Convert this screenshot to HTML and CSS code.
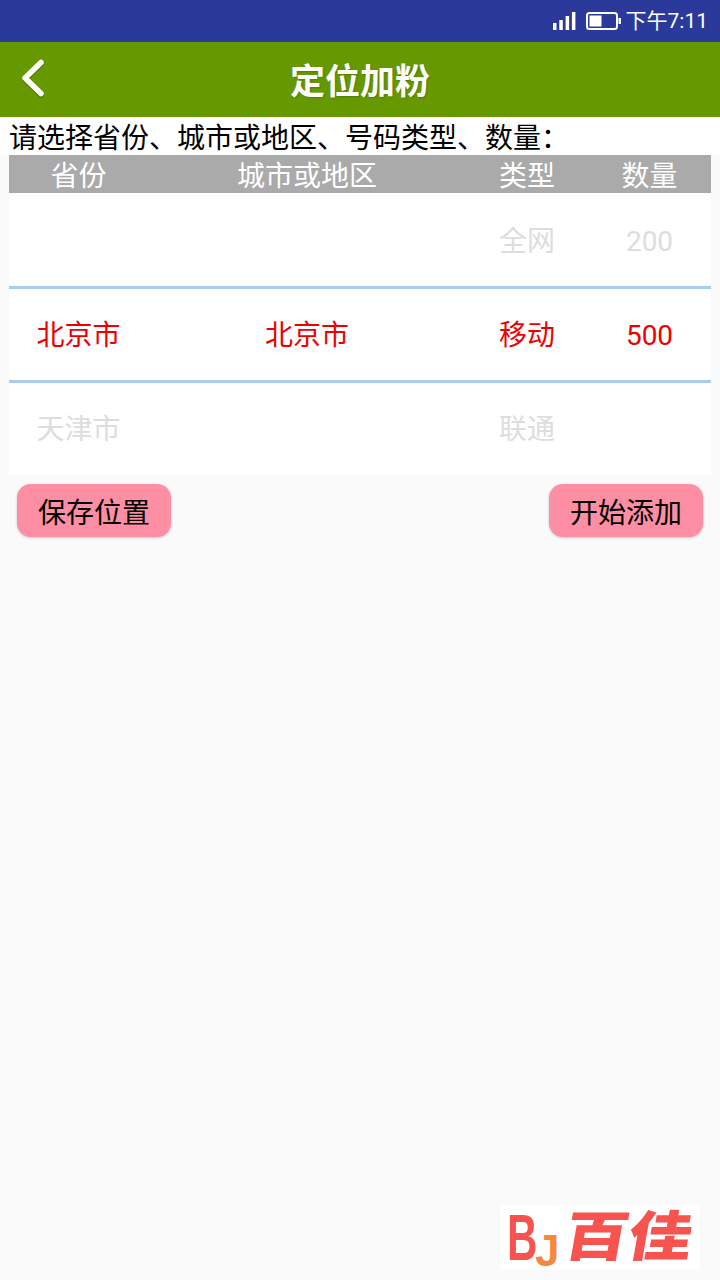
FILE: index.html
```html
<!DOCTYPE html>
<html lang="zh-CN">
<head>
    <meta charset="UTF-8">
    <meta name="viewport" content="width=device-width, initial-scale=1.0">
    <title>定位加粉</title>
    <link rel="stylesheet" href="styles.css">
</head>
<body>
<div class="screen">
    <div class="status-bar">
        <svg class="signal-icon" width="23" height="18" viewBox="0 0 23 18">
            <rect x="0" y="11" width="3.5" height="7" fill="#fff"/>
            <rect x="6.3" y="8" width="3.5" height="10" fill="#fff"/>
            <rect x="12.6" y="4" width="3.5" height="14" fill="#fff"/>
            <rect x="18.9" y="0" width="3.5" height="18" fill="#fff"/>
        </svg>
        <svg class="battery-icon" width="35" height="18" viewBox="0 0 35 18">
            <rect x="1" y="1" width="30" height="16" rx="2.5" fill="none" stroke="#fff" stroke-width="2"/>
            <rect x="3.500" y="3.500" width="12" height="11" fill="#fff"/>
            <rect x="32.500" y="6" width="2.500" height="6" fill="#fff"/>
        </svg>
        <span class="clock">下午7:11</span>
    </div>

    <div class="toolbar">
        <svg class="back-icon" width="30" height="42" viewBox="0 0 30 42">
            <path class="back-shadow" d="M23 6 L7 21.5 L23 37"/>
            <path class="back-arrow" d="M23 4.500 L7 20 L23 35.500"/>
        </svg>
        <h1 class="title">定位加粉</h1>
    </div>

    <p class="hint">请选择省份、城市或地区、号码类型、数量：</p>

    <div class="picker-head cols">
        <span>省份</span>
        <span>城市或地区</span>
        <span>类型</span>
        <span>数量</span>
    </div>

    <div class="picker">
        <div class="picker-row cols muted">
            <span></span>
            <span></span>
            <span>全网</span>
            <span>200</span>
        </div>
        <div class="picker-row cols selected">
            <span>北京市</span>
            <span>北京市</span>
            <span>移动</span>
            <span>500</span>
        </div>
        <div class="picker-row cols muted last">
            <span>天津市</span>
            <span></span>
            <span>联通</span>
            <span></span>
        </div>
    </div>

    <div class="actions">
        <button type="button" class="pink-btn">保存位置</button>
        <button type="button" class="pink-btn">开始添加</button>
    </div>

    <div class="spacer"></div>

    <div class="watermark">
        <div class="logo">
            <span class="logo-b">B</span><span class="logo-j">J</span><span class="logo-name">百佳</span>
        </div>
    </div>
</div>
</body>
</html>
```

FILE: styles.css
```css
* { box-sizing: border-box; }
html, body { margin: 0; padding: 0; }
body { font-family: Roboto, "Noto Sans CJK SC", sans-serif; background-color: #fafafa; }
.screen { width: 720px; height: 1280px; display: flex; flex-direction: column; overflow: hidden; }

/* Status bar */
.status-bar { height: 42px; background-color: #2b3a9a; color: #fff; display: flex; align-items: center; justify-content: flex-end; padding-right: 12px; }
.signal-icon { margin-right: 10px; }
.battery-icon { margin-right: 5px; }
.clock { font-size: 21px; line-height: 42px; }

/* Toolbar */
.toolbar { height: 75px; background-color: #669900; display: flex; align-items: center; justify-content: center; position: relative; padding-bottom: 3px; }
.back-icon { position: absolute; left: 18px; top: 16px; }
.back-arrow, .back-shadow { fill: none; stroke-width: 5.5; stroke-linecap: round; stroke-linejoin: round; }
.back-arrow { stroke: #fff; }
.back-shadow { stroke: rgba(0,0,0,0.2); }
.title { margin: 0; color: #fff; font-size: 35px; font-weight: 700; text-shadow: 1px 1px 2px rgba(0,0,0,0.2); }

.hint { margin: 0; height: 38px; padding-left: 9px; font-size: 28px; line-height: 44px; color: #000; background-color: #fff; white-space: nowrap; }

/* Picker */
.cols { display: grid; grid-template-columns: 139px 318px 122px 123px; text-align: center; }
.picker-head { height: 38px; margin: 0 9px; background-color: #aaaaaa; color: #fff; font-size: 28px; line-height: 44px; }
.picker { margin: 0 9px; background-color: #fff; height: 282px; }
.picker-row { height: 94px; font-size: 28px; line-height: 98px; }
.picker-row.muted { color: #dddddd; }
.picker-row.last { line-height: 100px; }
.picker-row.selected { color: #ee0000; border-top: 3px solid #a9cdea; border-bottom: 3px solid #a9cdea; line-height: 94px; height: 97px; margin-bottom: -3px; margin-top: -1px; }

/* Buttons */
.actions { display: flex; justify-content: space-between; padding: 9px 17px 0; }
.pink-btn { width: 154px; height: 53px; padding: 0; border: none; border-radius: 14px; background-color: #fe8ea3; color: #000; font-family: inherit; font-size: 28px; box-shadow: 0 1px 3px rgba(0,0,0,0.2); }

.spacer { flex: 1; }

/* Watermark logo */
.watermark { display: flex; justify-content: flex-end; padding: 0 20px 10px 0; }
.logo { width: 200px; height: 65px; background-color: #fff; display: flex; align-items: center; padding-left: 7px; color: #f75450; white-space: nowrap; }
.logo-b { display: inline-block; width: 28px; font-family: "Liberation Sans", sans-serif; font-size: 64px; line-height: 1; font-weight: 700; transform: scaleX(0.66); transform-origin: left center; }
.logo-j { display: inline-block; width: 26px; font-family: "Liberation Sans", sans-serif; font-size: 44px; line-height: 1; font-weight: 700; color: #f58a3c; margin-top: 26px; }
.logo-name { display: inline-block; font-size: 54px; font-weight: 900; line-height: 1; margin-left: 4px; transform: skewX(-10deg) scaleX(1.18); transform-origin: left center; }
```
